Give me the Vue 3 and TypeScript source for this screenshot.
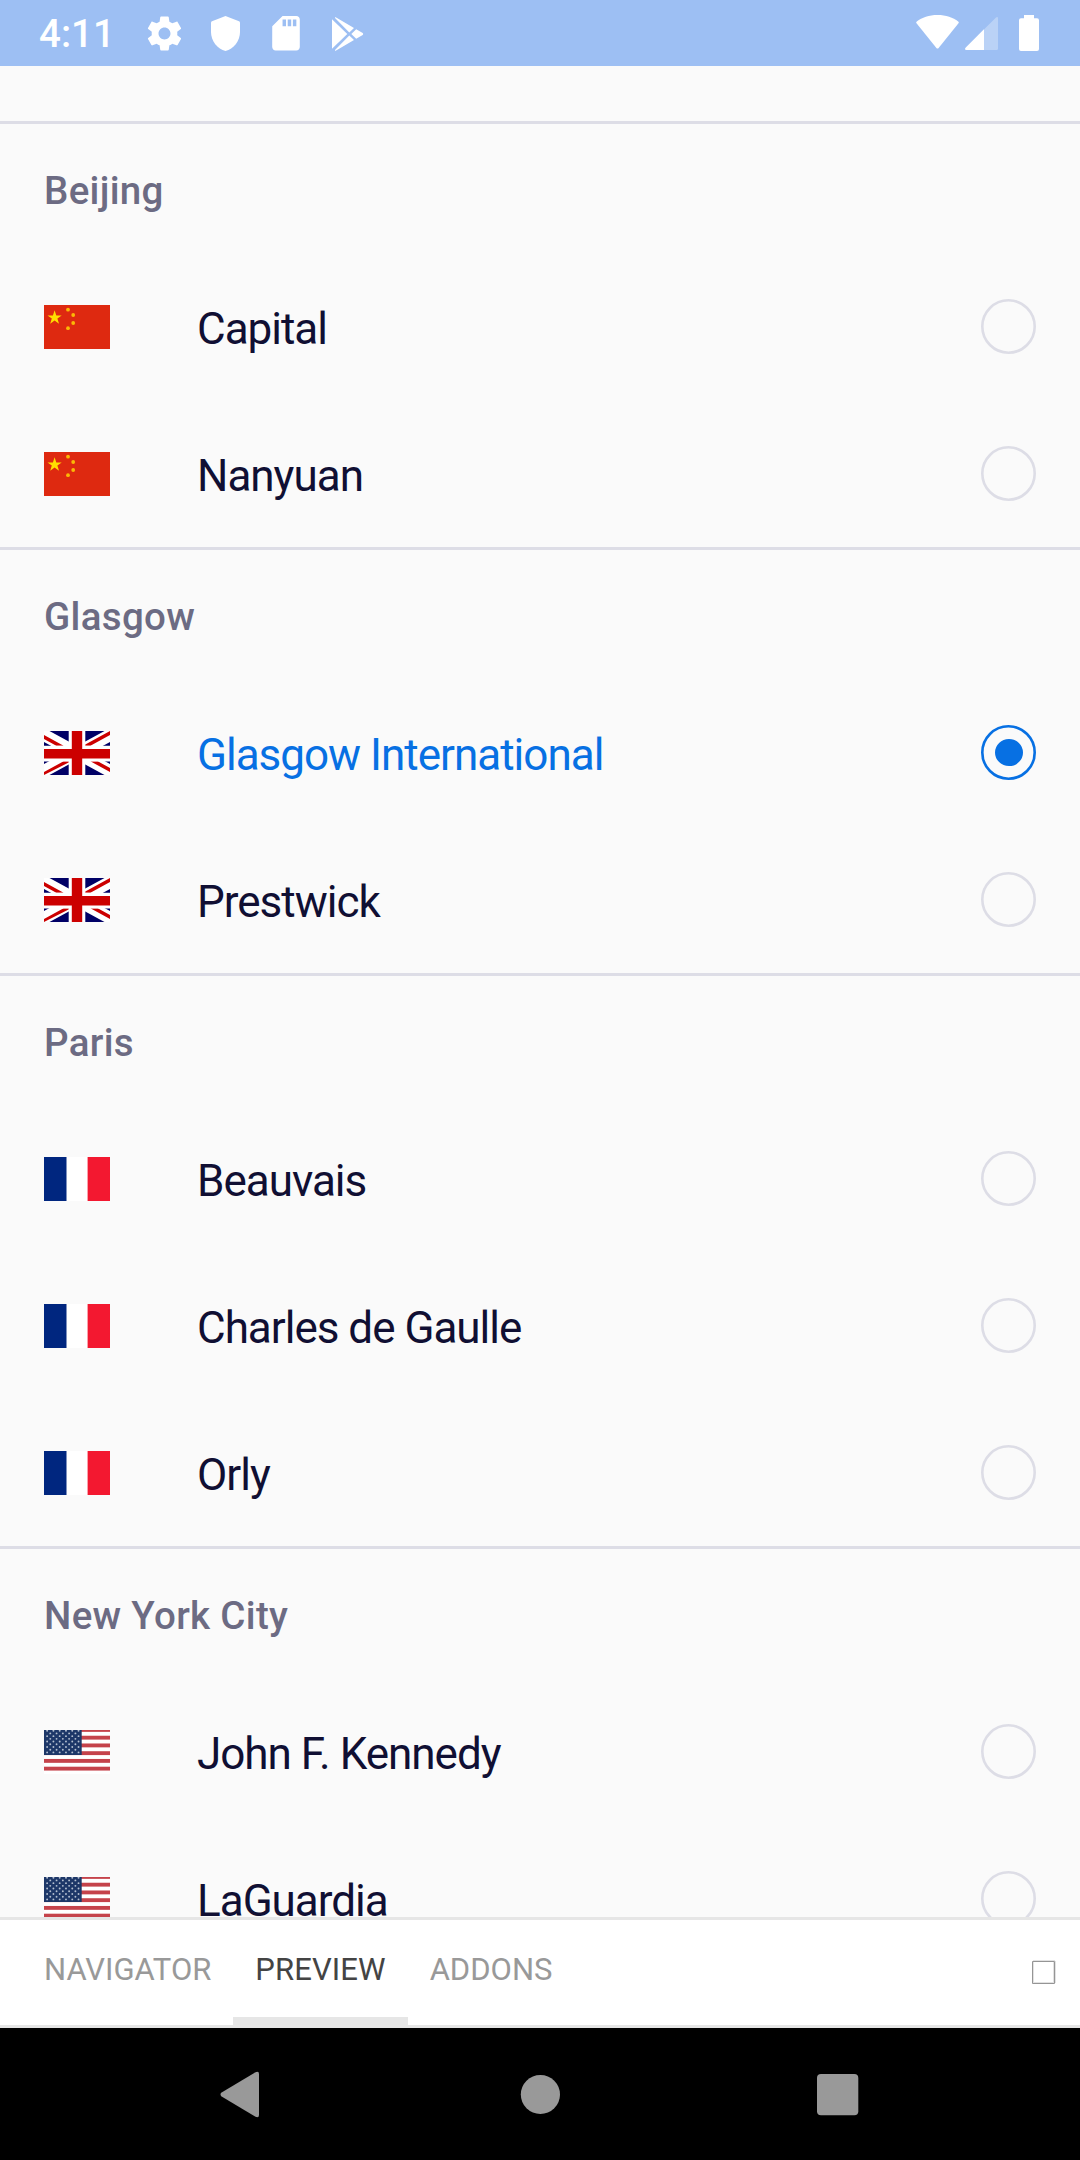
<script setup lang="ts">
import { ref } from 'vue'

type Country = 'cn' | 'gb' | 'fr' | 'us'

interface City {
  name: string
  country: Country
  airports: string[]
}

const cities: City[] = [
  { name: 'Beijing', country: 'cn', airports: ['Capital', 'Nanyuan'] },
  { name: 'Glasgow', country: 'gb', airports: ['Glasgow International', 'Prestwick'] },
  { name: 'Paris', country: 'fr', airports: ['Beauvais', 'Charles de Gaulle', 'Orly'] },
  { name: 'New York City', country: 'us', airports: ['John F. Kennedy', 'LaGuardia'] },
]

const tabs = ['NAVIGATOR', 'PREVIEW', 'ADDONS']

const selected = ref('Glasgow International')
const activeTab = ref('PREVIEW')

// Staggered star field of the US canton
const stars: { x: number; y: number }[] = []
for (let row = 1; row <= 9; row++) {
  for (let col = 1; col <= 11; col++) {
    if ((row + col) % 2 === 0) stars.push({ x: col * 3.14, y: -2 + row * 2.71 })
  }
}
</script>

<template>
  <div class="screen">
    <header class="status">
      <span class="clock">4:11</span>
      <svg class="gear" viewBox="0 0 24 24">
        <path d="M19.43 12.98c.04-.32.07-.64.07-.98s-.03-.66-.07-.98l2.11-1.65c.19-.15.24-.42.12-.64l-2-3.46c-.12-.22-.39-.3-.61-.22l-2.49 1c-.52-.4-1.08-.73-1.69-.98l-.38-2.65C14.46 2.18 14.25 2 14 2h-4c-.25 0-.46.18-.49.42l-.38 2.65c-.61.25-1.17.59-1.69.98l-2.49-1c-.23-.09-.49 0-.61.22l-2 3.46c-.13.22-.07.49.12.64l2.11 1.65c-.04.32-.07.65-.07.98s.03.66.07.98l-2.11 1.65c-.19.15-.24.42-.12.64l2 3.46c.12.22.39.3.61.22l2.49-1c.52.4 1.08.73 1.69.98l.38 2.65c.03.24.24.42.49.42h4c.25 0 .46-.18.49-.42l.38-2.65c.61-.25 1.17-.59 1.69-.98l2.49 1c.23.09.49 0 .61-.22l2-3.46c.12-.22.07-.49-.12-.64l-2.11-1.65zM12 15.5c-1.93 0-3.5-1.57-3.5-3.5s1.57-3.5 3.5-3.5 3.5 1.57 3.5 3.5-1.57 3.5-3.5 3.5z" />
      </svg>
      <svg class="shield" viewBox="0 0 29 35">
        <path d="M14.5 0 L28 5.2 Q29 5.6 29 6.6 V16 C29 25 22.5 33 14.5 35 C6.5 33 0 25 0 16 V6.6 Q0 5.6 1 5.2 Z" />
      </svg>
      <svg class="card" viewBox="4 2 16 20">
        <path d="M18 2h-8L4.02 8 4 20c0 1.100.9 2 2 2h12c1.100 0 2-.9 2-2V4c0-1.100-.9-2-2-2zm-6 6h-2V4h2v4zm3 0h-2V4h2v4zm3 0h-2V4h2v4z" />
      </svg>
      <svg class="play" viewBox="0 0 32 34">
        <path d="M0 2.300 L15.300 17 L0 31.700 Z M3.300 0 L22 11 L17.300 15.500 L3 1 Z M3.300 34 L22 23 L17.300 18.500 L3 33 Z M24.200 12.300 L30.700 16.100 Q31.800 17 30.700 17.900 L24.200 21.700 L19.300 17 Z" />
      </svg>
      <div class="spacer"></div>
      <svg class="wifi" viewBox="0 0 43 34">
        <path d="M.5 8.300 Q-.2 7.300 .8 6.500 C6 2.500 13 0 21.500 0 C30 0 37 2.500 42.200 6.500 Q43.200 7.300 42.500 8.300 L22.600 33 Q21.500 34.200 20.400 33 Z" />
      </svg>
      <svg class="signal" viewBox="0 0 33 33">
        <path d="M31 .5 Q33 -.6 33 1.500 V31.500 Q33 33 31.500 33 H1.500 Q-.8 33 .6 30.700 Z" fill-opacity=".3" />
        <path d="M19 12.300 V33 H1.500 Q-.8 33 .6 30.700 Z" />
      </svg>
      <svg class="battery" viewBox="0 0 20 36">
        <path d="M5 0 H15 V3.300 H18 Q20 3.300 20 5.300 V34 Q20 36 18 36 H2 Q0 36 0 34 V5.300 Q0 3.300 2 3.300 H5 Z" />
      </svg>
    </header>

    <main class="list">
      <section v-for="city in cities" :key="city.name" class="city">
        <h2>{{ city.name }}</h2>
        <div
          v-for="airport in city.airports"
          :key="airport"
          class="row"
          :class="{ selected: airport === selected }"
          @click="selected = airport"
        >
          <svg v-if="city.country === 'cn'" class="flag" viewBox="0 0 66 44">
            <path fill="#de2910" d="M0 0h66v44H0z" />
            <path fill="#ffde00" d="M10.600 5.200l1.700 5.200h5.400l-4.300 3.200 1.600 5.200-4.400-3.200-4.400 3.200 1.600-5.200-4.300-3.200h5.400z" />
            <g fill="#fbb806">
              <circle cx="24" cy="4.700" r="1.900" />
              <circle cx="29.200" cy="10" r="1.900" />
              <circle cx="29.200" cy="18" r="1.900" />
              <circle cx="24" cy="23.200" r="1.900" />
            </g>
          </svg>
          <svg v-else-if="city.country === 'gb'" class="flag" viewBox="0 0 66 44">
            <path fill="#006" d="M0 0h66v44H0z" />
            <path fill="#fff" d="M0-3L66 33V47L0 11zM66-3L0 33V47L66 11z" />
            <path fill="#c00" d="M0 4L19.600 14.700H12.300L0 8zM66 0V4L46.400 14.700H39zM66 41L46.400 30.300H53.700L66 37zM0 44V41L19.600 30.300H27z" />
            <path fill="#fff" d="M24.700 0h16.600v44H24.700zM0 14.700h66v15.900H0z" />
            <path fill="#c00" d="M27.800 0h10.400v44H27.800zM0 18h66v9.600H0z" />
          </svg>
          <svg v-else-if="city.country === 'fr'" class="flag" viewBox="0 0 66 44">
            <path fill="#fff" d="M0 0h66v44H0z" />
            <path fill="#00267f" d="M0 0h22.500v44H0z" />
            <path fill="#f31830" d="M43.600 0H66v44H43.600z" />
          </svg>
          <svg v-else class="flag" viewBox="0 0 66 44">
            <path fill="#fff" d="M0 0h66v44H0z" />
            <rect v-for="n in 6" :key="n" x="0" :y="-2 + (n - 1) * 7.74" width="66" height="3.870" fill="#c5434b" />
            <path fill="#1d3768" d="M0 0h37.700v25H0z" />
            <circle v-for="(s, i) in stars" :key="i" :cx="s.x" :cy="s.y" r=".95" fill="#b4bfd0" />
          </svg>
          <span class="name">{{ airport }}</span>
          <svg class="radio" viewBox="0 0 55 55">
            <circle class="ring" cx="27.500" cy="27.500" r="26.200" />
            <ellipse v-if="airport === selected" class="dot" cx="28" cy="27.500" rx="14" ry="13.600" />
          </svg>
        </div>
      </section>
    </main>

    <nav class="tabs">
      <button
        v-for="tab in tabs"
        :key="tab"
        class="tab"
        :class="{ active: tab === activeTab }"
        @click="activeTab = tab"
      >{{ tab }}</button>
      <div class="spacer"></div>
      <svg class="box" viewBox="0 0 24 24">
        <path fill="none" stroke="#e2e2e2" d="M1.500 2v20.500M21.500 2v20.500M23.500 1v22M1 .5h22M1 22.500h21" />
        <path fill="none" stroke="#959595" d="M.5 1.500h22v22H.5z" />
      </svg>
    </nav>

    <footer class="system">
      <svg viewBox="0 0 660 48">
        <path d="M1.200 25.200 Q-.2 23.500 1.200 21.800 L35.500 1.300 Q39 -.2 39 3 V44 Q39 47.200 35.500 45.700 Z" />
        <circle cx="320.400" cy="23.500" r="19.600" />
        <rect x="597" y="3" width="41.300" height="41.300" rx="4" />
      </svg>
    </footer>
  </div>
</template>

<style>
body {
  margin: 0;
}
</style>

<style scoped>
.screen {
  display: flex;
  flex-direction: column;
  width: 1080px;
  height: 2160px;
  overflow: hidden;
  background: #fafafa;
  font-family: Roboto, sans-serif;
}
svg {
  display: block;
  flex: none;
}
.spacer {
  flex: 1;
}
.status {
  display: flex;
  align-items: flex-start;
  flex: none;
  box-sizing: border-box;
  height: 66px;
  padding: 0 41px 0 39px;
  background: #9dbff3;
  fill: #fff;
}
.clock {
  width: 105px;
  color: #fff;
  font-size: 38.500px;
  font-weight: 500;
  line-height: 46px;
  margin-top: 11px;
}
.gear {
  width: 41px;
  height: 41px;
  margin-top: 13px;
}
.shield {
  width: 29px;
  height: 35px;
  margin: 16px 0 0 26px;
}
.card {
  width: 28px;
  height: 34.500px;
  margin: 16px 0 0 32px;
}
.play {
  width: 32px;
  height: 34px;
  margin: 16.500px 0 0 32px;
}
.wifi {
  width: 43px;
  height: 34px;
  margin-top: 15px;
}
.signal {
  width: 33px;
  height: 33px;
  margin: 17px 0 0 6px;
}
.battery {
  width: 20px;
  height: 36px;
  margin: 15px 0 0 21px;
}
.list {
  flex: none;
  box-sizing: border-box;
  height: 1851px;
  padding-top: 55px;
  overflow: hidden;
}
.city {
  border-top: 3px solid #dddde6;
}
h2 {
  box-sizing: border-box;
  height: 129px;
  margin: 0;
  padding: 43px 44px 0;
  color: #6c6b83;
  font-size: 38.500px;
  font-weight: 500;
  line-height: 48px;
  letter-spacing: 0.320px;
}
.row {
  display: flex;
  align-items: flex-start;
  box-sizing: border-box;
  height: 147px;
  padding: 46px 44px 0;
  color: #100f33;
}
.flag {
  width: 66px;
  height: 44px;
  margin-top: 6px;
}
.name {
  flex: 1;
  margin: 4px 0 0 87px;
  font-size: 44px;
  line-height: 52px;
  letter-spacing: -1px;
  white-space: nowrap;
}
.radio {
  width: 55px;
  height: 55px;
}
.ring {
  fill: none;
  stroke: #dddde6;
  stroke-width: 2.600;
}
.dot {
  fill: #0770e3;
}
.selected {
  color: #0770e3;
}
.selected .ring {
  stroke: #0770e3;
}
.tabs {
  display: flex;
  flex: none;
  box-sizing: border-box;
  height: 111px;
  padding: 0 24px 0 22px;
  border-top: 3px solid #e6e6e6;
  border-bottom: 3px solid #e6e6e6;
  background: #fff;
}
.tab {
  box-sizing: border-box;
  height: 105px;
  padding: 2px 22px 0;
  border: 0;
  border-bottom: 8px solid transparent;
  background: none;
  color: #999;
  font: 31px/36px Roboto, sans-serif;
}
.tab.active {
  border-bottom-color: #e6e6e6;
  color: #444;
  letter-spacing: 0.100px;
}
.box {
  width: 24px;
  height: 24px;
  margin-top: 40px;
}
.system {
  display: flex;
  align-items: center;
  flex: 1;
  background: #000;
  fill: #999;
}
.system svg {
  width: 660px;
  height: 48px;
  margin: 2px 0 0 220px;
}
</style>
